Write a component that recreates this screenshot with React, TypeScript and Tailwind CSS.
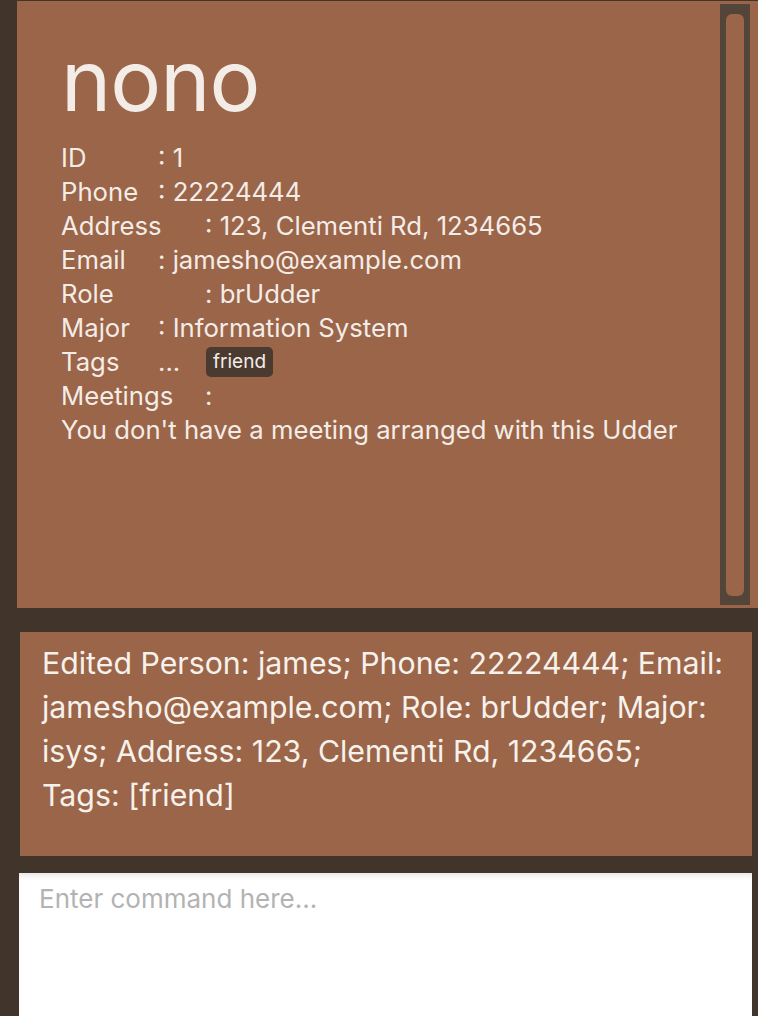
import React from 'react';

const rows: { label: string; value: string; wide?: boolean }[] = [
  { label: 'ID', value: '1' },
  { label: 'Phone', value: '22224444' },
  { label: 'Address', value: '123, Clementi Rd, 1234665', wide: true },
  { label: 'Email', value: 'jamesho@example.com' },
  { label: 'Role', value: 'brUdder', wide: true },
  { label: 'Major', value: 'Information System' },
];

const resultLines = [
  'Edited Person: james; Phone: 22224444; Email:',
  'jamesho@example.com; Role: brUdder; Major:',
  'isys; Address: 123, Clementi Rd, 1234665;',
  'Tags: [friend]',
];

const App: React.FC = () => {
  return (
    <div
      className="w-[758px] h-[1016px] bg-[#41342b] flex flex-col overflow-hidden"
      style={{ fontFamily: 'Inter, "Noto Sans", sans-serif' }}
    >
      {/* Person detail panel */}
      <div className="mt-[1px] ml-[17px] h-[607px] bg-[#9a6548] flex">
        <div className="flex-1 pl-[44px] pt-[30px] text-[#f4ece7]">
          <div className="text-[85px] leading-[100px] tracking-[-1px]">nono</div>
          <div className="mt-[10px] text-[25.7px] leading-[34px]">
            {rows.map((r) => (
              <div key={r.label} className="flex">
                <span className={r.wide ? 'w-[144px]' : 'w-[97px]'}>{r.label}</span>
                <span>: {r.value}</span>
              </div>
            ))}
            <div className="flex items-center">
              <span className="w-[97px]">Tags</span>
              <span className="w-[48px]">...</span>
              <span className="bg-[#4a3a30] rounded-[5px] px-[7px] h-[30px] leading-[30px] text-[19px]">
                friend
              </span>
            </div>
            <div className="flex">
              <span className="w-[144px]">Meetings</span>
              <span>:</span>
            </div>
            <div>You don't have a meeting arranged with this Udder</div>
          </div>
        </div>
        {/* scrollbar */}
        <div className="my-[3px] mr-[8px] w-[30px] bg-[#54453b] p-[6px] pt-[10px] pb-[9px]">
          <div className="h-full bg-[#9a6548] rounded-[6px]" />
        </div>
      </div>

      {/* Result display */}
      <div className="mt-[24px] ml-[20px] w-[732px] h-[224px] bg-[#9a6548] pl-[22px] pt-[9px] text-[#f7f1ec] text-[30.3px] leading-[44px] whitespace-nowrap">
        {resultLines.map((l) => (
          <div key={l}>{l}</div>
        ))}
      </div>

      {/* Command box */}
      <div className="mt-[17px] ml-[19px] w-[733px] flex-1 bg-white shadow-[inset_0_6px_6px_-4px_rgba(0,0,0,0.12)] px-[20px] pt-[8px]">
        <div className="text-[26px] leading-[36px] text-[#b3b3b3]">Enter command here...</div>
      </div>
    </div>
  );
};

export default App;
